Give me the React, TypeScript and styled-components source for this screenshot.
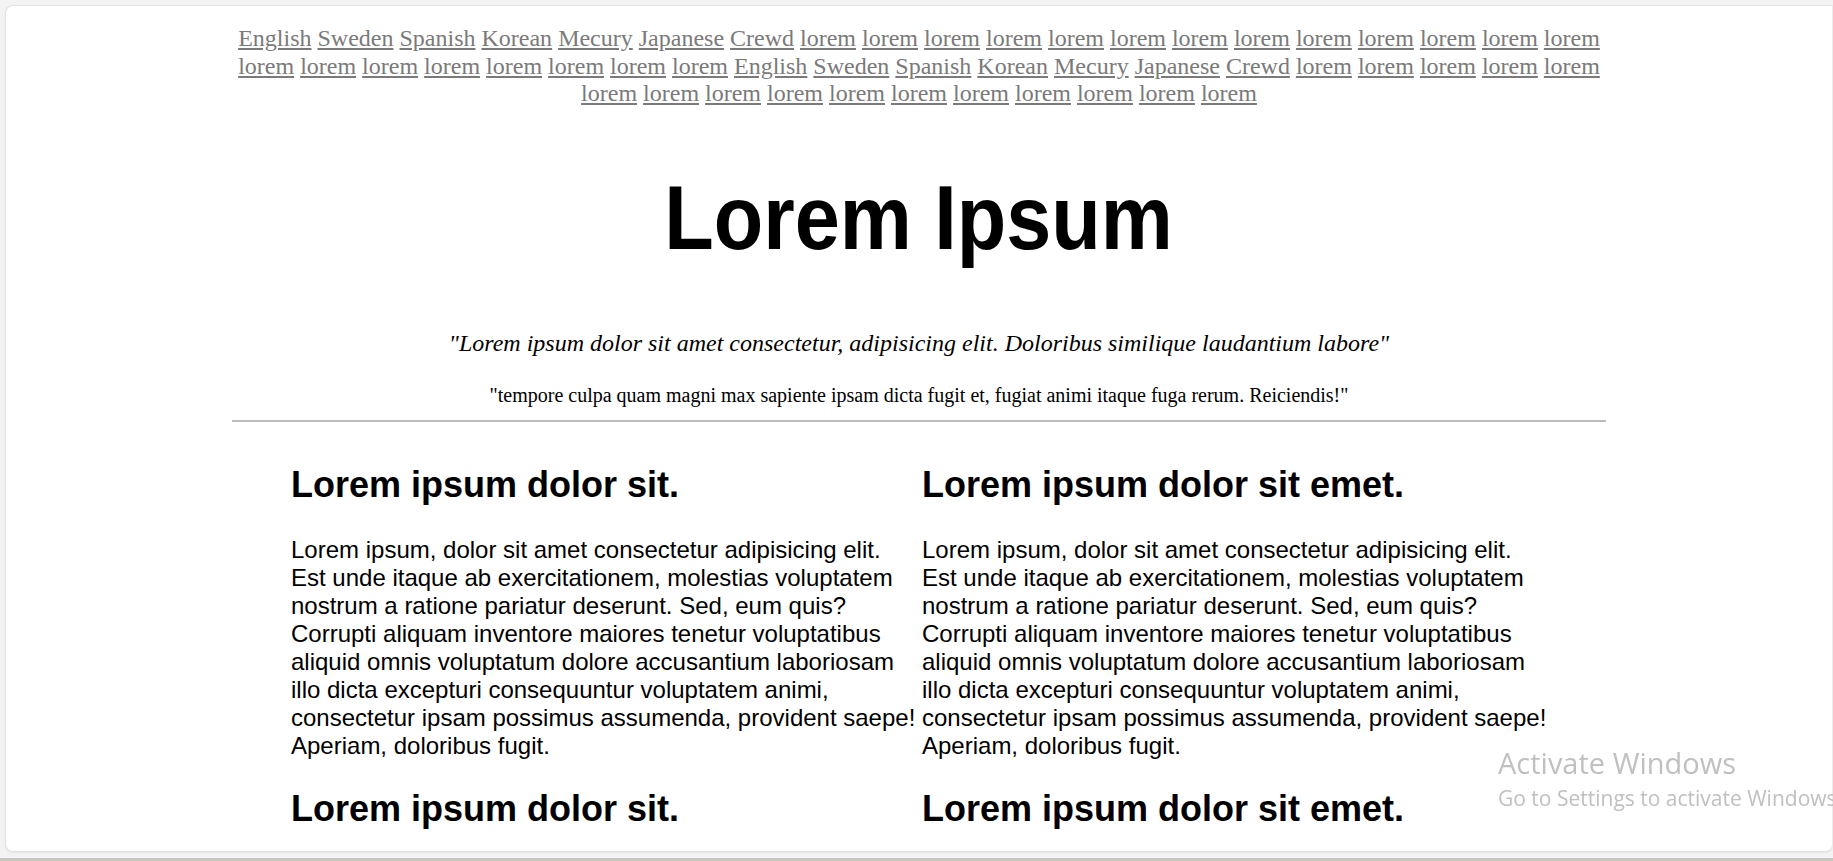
import React from "react";
import styled, { createGlobalStyle } from "styled-components";

const GlobalStyle = createGlobalStyle`
  html, body {
    margin: 0;
    padding: 0;
    height: 100%;
    overflow: hidden;
    background: #f3f3f3;
  }
  #root {
    height: 100%;
  }
`;

const Frame = styled.div`
  height: 861px;
  display: flex;
  flex-direction: column;
  box-sizing: border-box;
  padding: 5px 0 0 5px;
`;

const Card = styled.div`
  flex: 1;
  min-height: 0;
  overflow: hidden;
  background: #ffffff;
  border: 1px solid #e2e2e2;
  border-right: 1px solid #ececec;
  border-radius: 8px 0 8px 8px;
  box-shadow: 0 1px 2px rgba(0, 0, 0, 0.06);
`;

const BottomGap = styled.div`
  height: 6px;
  flex: none;
`;

const TaskbarEdge = styled.div`
  height: 3px;
  flex: none;
  margin-left: -5px;
  background: #c6c6bf;
`;

const Main = styled.main`
  width: 1374px;
  margin: 0 auto;
  padding-top: 19px;
`;

const Nav = styled.nav`
  text-align: center;
  font-family: "Liberation Serif", "Times New Roman", serif;
  font-size: 24px;
  line-height: 27.6px;
`;

const NavLink = styled.a`
  color: #7a7a7a;
  text-decoration: underline;
  text-decoration-color: #7a7a7a;
`;

const TitleWrap = styled.div`
  margin-top: 60px;
  text-align: center;
  height: 101px;
`;

const Title = styled.h1`
  display: inline-block;
  margin: 0;
  font-family: "Liberation Sans", Arial, sans-serif;
  font-weight: 700;
  font-size: 90px;
  line-height: 101px;
  color: #000;
  transform: scaleX(0.9);
  transform-origin: center;
`;

const Quote = styled.p`
  margin: 61px 0 0;
  text-align: center;
  font-family: "Liberation Serif", "Times New Roman", serif;
  font-style: italic;
  font-size: 24px;
  line-height: 27.6px;
  color: #000;
`;

const SubQuote = styled.p`
  margin: 27px 0 0;
  text-align: center;
  font-family: "Liberation Serif", "Times New Roman", serif;
  font-size: 20px;
  line-height: 23px;
  color: #000;
`;

const Rule = styled.hr`
  margin: 13px 0 0;
  border: none;
  border-top: 2px solid #bcbcbc;
  height: 0;
`;

const Columns = styled.section`
  margin: 42px 0 0 59px;
  display: grid;
  grid-template-columns: repeat(2, 628px);
  column-gap: 3px;
  row-gap: 28px;
`;

const Article = styled.article`
  font-family: "Liberation Sans", Arial, sans-serif;
  color: #000;
`;

const Heading = styled.h2`
  margin: 0;
  font-size: 36px;
  font-weight: 700;
  line-height: 41.4px;
`;

const Body = styled.p`
  margin: 30px 0 0;
  font-size: 24px;
  line-height: 28px;
`;

const Watermark = styled.div`
  position: fixed;
  left: 1498px;
  top: 748px;
  font-family: "Open Sans", "Noto Sans", sans-serif;
  color: #c0c0c0;
  white-space: nowrap;
  pointer-events: none;
`;

const WatermarkTitle = styled.div`
  font-size: 29px;
  line-height: 29px;
`;

const WatermarkSub = styled.div`
  margin-top: 11px;
  font-size: 21px;
  line-height: 21px;
`;

const group = ["English", "Sweden", "Spanish", "Korean", "Mecury", "Japanese", "Crewd"];
const navItems: string[] = [
  ...group,
  ...Array(21).fill("lorem"),
  ...group,
  ...Array(16).fill("lorem"),
];

const paragraph =
  "Lorem ipsum, dolor sit amet consectetur adipisicing elit. Est unde itaque ab exercitationem, molestias voluptatem nostrum a ratione pariatur deserunt. Sed, eum quis? Corrupti aliquam inventore maiores tenetur voluptatibus aliquid omnis voluptatum dolore accusantium laboriosam illo dicta excepturi consequuntur voluptatem animi, consectetur ipsam possimus assumenda, provident saepe! Aperiam, doloribus fugit.";

const articles = [
  "Lorem ipsum dolor sit.",
  "Lorem ipsum dolor sit emet.",
  "Lorem ipsum dolor sit.",
  "Lorem ipsum dolor sit emet.",
];

export default function App() {
  return (
    <>
      <GlobalStyle />
      <Frame>
        <Card>
          <Main>
            <Nav>
              {navItems.map((item, i) => (
                <React.Fragment key={i}>
                  <NavLink href="#">{item}</NavLink>
                  {i < navItems.length - 1 ? " " : null}
                </React.Fragment>
              ))}
            </Nav>
            <TitleWrap>
              <Title>Lorem Ipsum</Title>
            </TitleWrap>
            <Quote>
              "Lorem ipsum dolor sit amet consectetur, adipisicing elit. Doloribus similique laudantium labore"
            </Quote>
            <SubQuote>
              "tempore culpa quam magni max sapiente ipsam dicta fugit et, fugiat animi itaque fuga rerum. Reiciendis!"
            </SubQuote>
            <Rule />
            <Columns>
              {articles.map((h, i) => (
                <Article key={i}>
                  <Heading>{h}</Heading>
                  <Body>{paragraph}</Body>
                </Article>
              ))}
            </Columns>
          </Main>
        </Card>
        <BottomGap />
        <TaskbarEdge />
      </Frame>
      <Watermark>
        <WatermarkTitle>Activate Windows</WatermarkTitle>
        <WatermarkSub>Go to Settings to activate Windows.</WatermarkSub>
      </Watermark>
    </>
  );
}
